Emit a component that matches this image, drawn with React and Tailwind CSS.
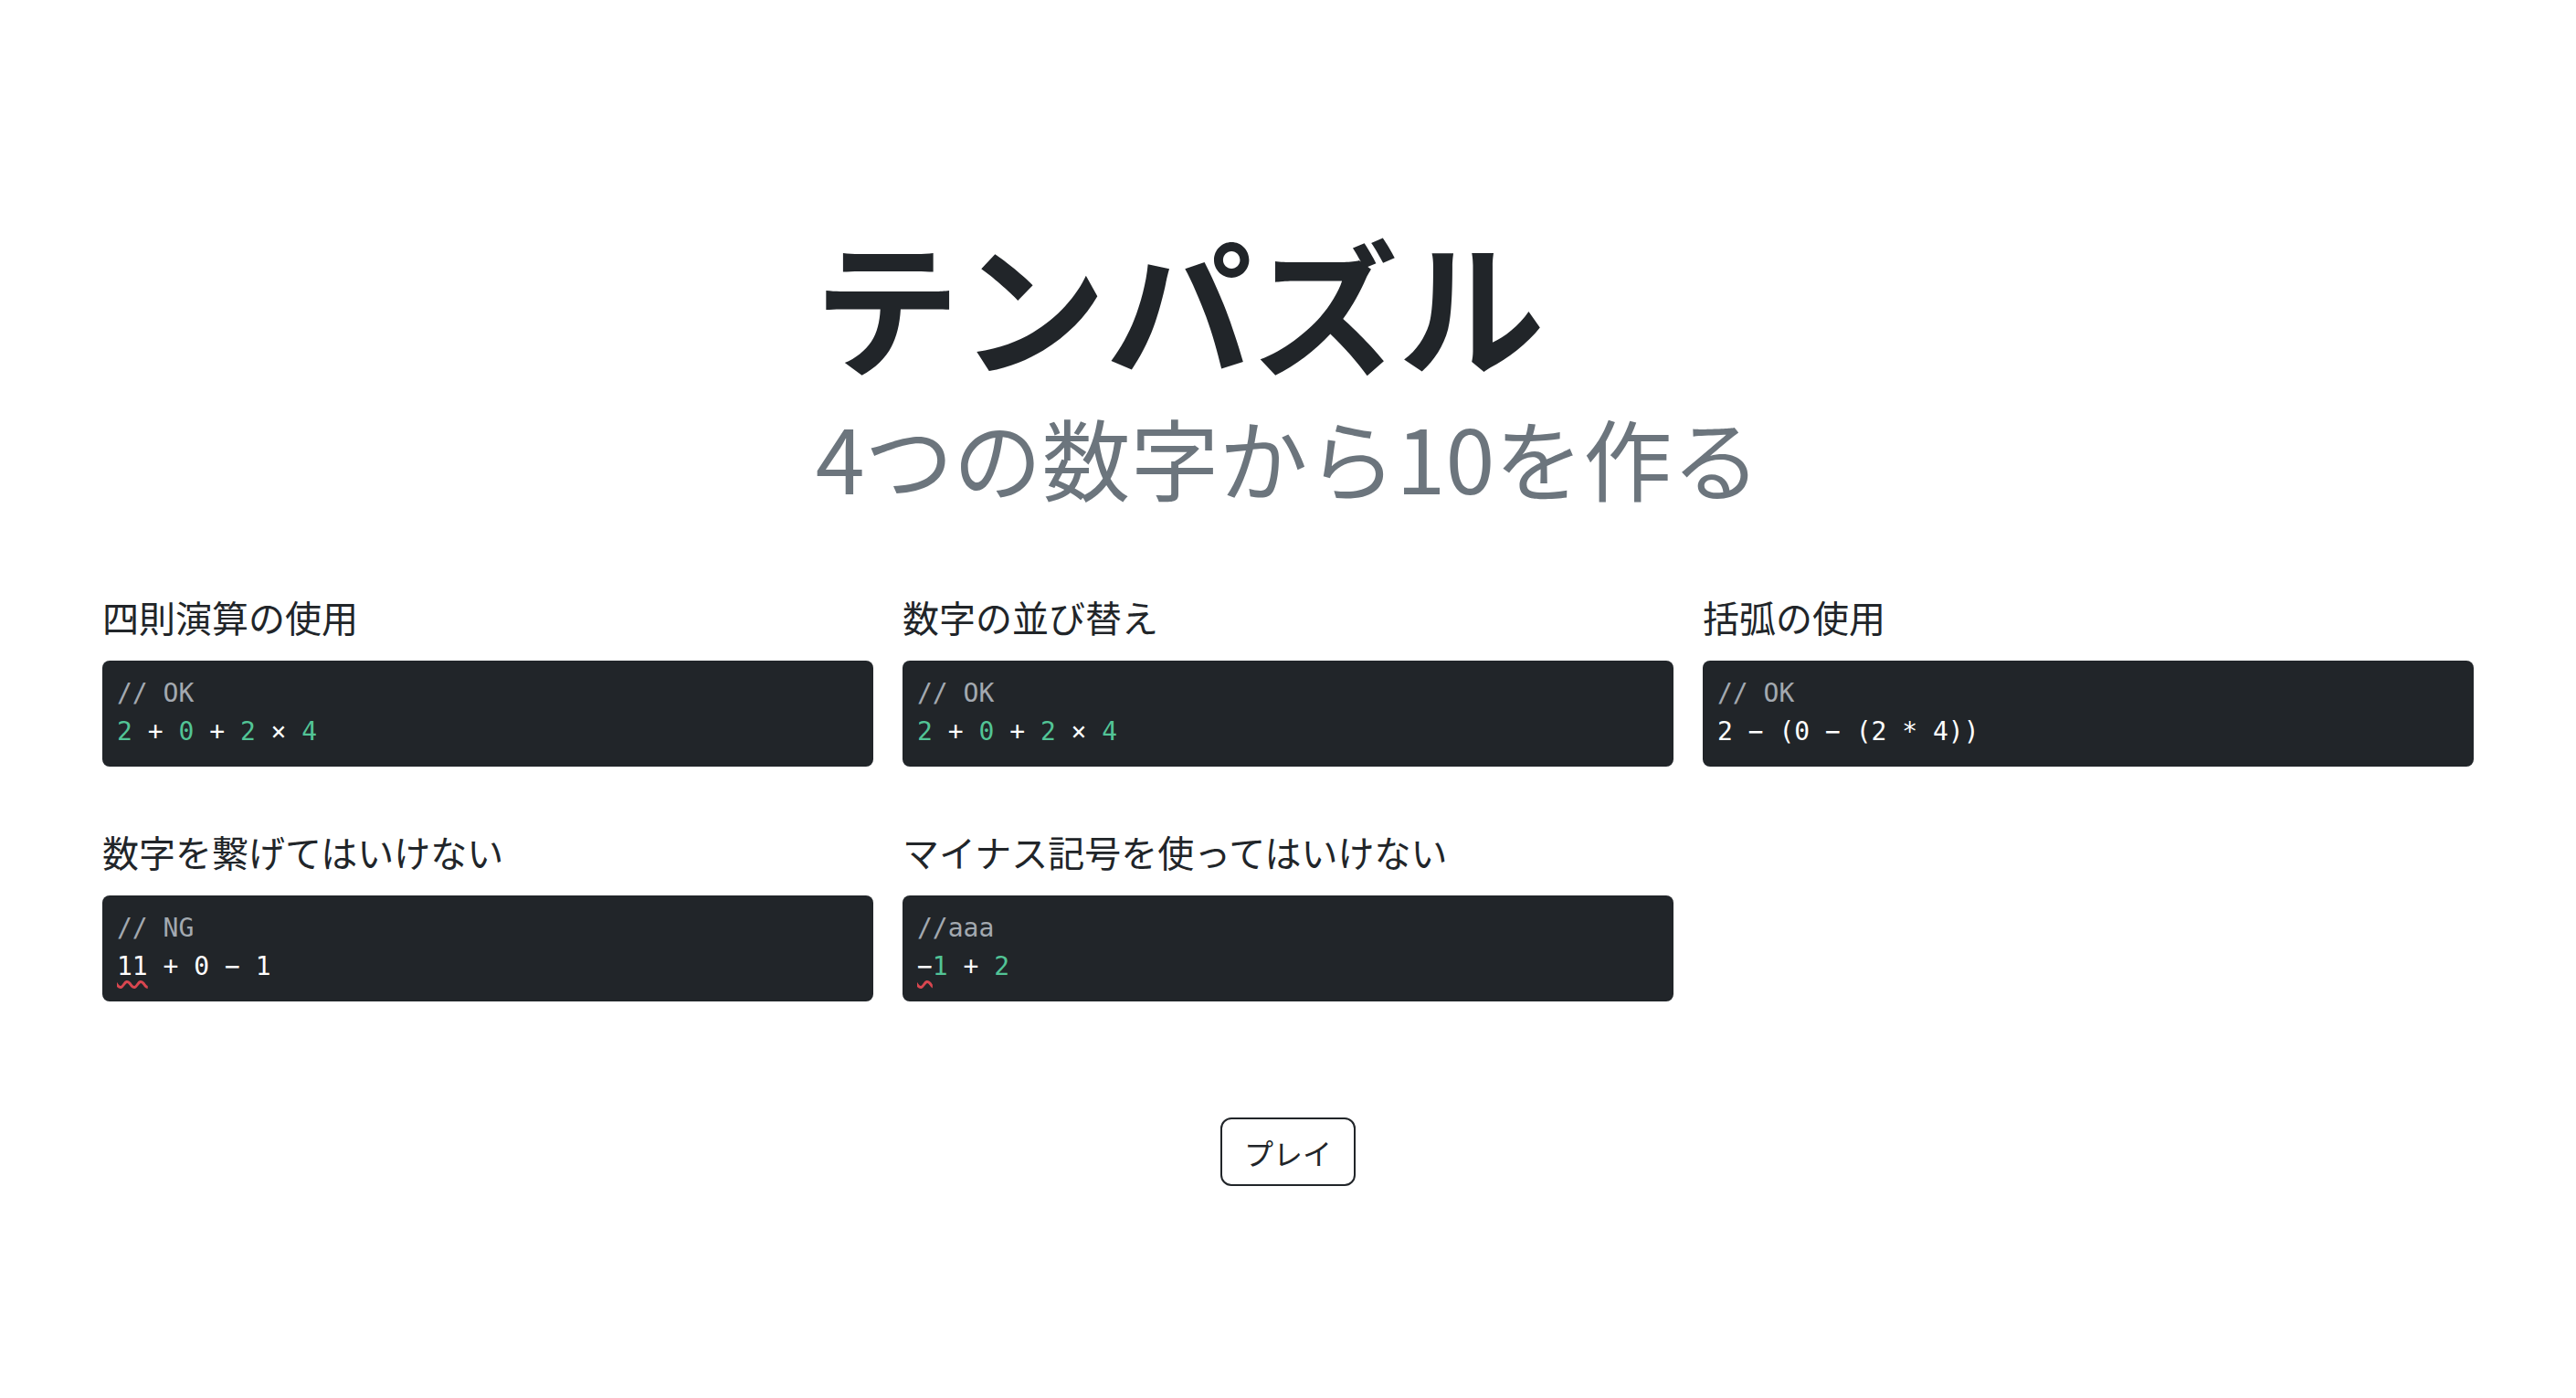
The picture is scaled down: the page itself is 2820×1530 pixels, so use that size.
import React from 'react';

const jp = { fontFamily: '"Noto Sans CJK JP", "Noto Sans", sans-serif' };
const mono = { fontFamily: '"DejaVu Sans Mono", "Liberation Mono", monospace' };

const G = ({ children }) => <span className="text-[#52c496]">{children}</span>;
const W = ({ children }) => <span className="text-white">{children}</span>;
const Bad = ({ children }) => (
  <span className="underline decoration-wavy decoration-[#d9464f] decoration-[3px] underline-offset-[6px]">{children}</span>
);

const rules = [
  {
    title: '四則演算の使用',
    comment: '// OK',
    code: (
      <>
        <G>2</G> <W>+</W> <G>0</G> <W>+</W> <G>2</G> <W>×</W> <G>4</G>
      </>
    ),
  },
  {
    title: '数字の並び替え',
    comment: '// OK',
    code: (
      <>
        <G>2</G> <W>+</W> <G>0</G> <W>+</W> <G>2</G> <W>×</W> <G>4</G>
      </>
    ),
  },
  {
    title: '括弧の使用',
    comment: '// OK',
    code: <W>2 − (0 − (2 * 4))</W>,
  },
  {
    title: '数字を繋げてはいけない',
    comment: '// NG',
    code: (
      <W>
        <Bad>11</Bad> + 0 − 1
      </W>
    ),
  },
  {
    title: 'マイナス記号を使ってはいけない',
    comment: '//aaa',
    code: (
      <>
        <W><Bad>−</Bad></W><G>1</G> <W>+</W> <G>2</G>
      </>
    ),
  },
];

function Rule({ rule }) {
  return (
    <div className="flex flex-col">
      <h3 className="text-[40px] leading-[48px] text-[#212529] mb-[24px]" style={jp}>
        {rule.title}
      </h3>
      <pre className="bg-[#212529] rounded-[8px] px-[16px] pt-[15px] pb-[17px] text-[28px] leading-[42px]" style={mono}>
        <div className="text-[#a3a9b0]">{rule.comment}</div>
        <div>{rule.code}</div>
      </pre>
    </div>
  );
}

export default function App() {
  return (
    <div className="min-h-screen bg-white pt-[234px]" style={jp}>
      <div className="flex justify-center">
        <div className="text-left">
          <h1 className="text-[160px] leading-[192px] font-bold text-[#212529] -ml-[2px]">テンパズル</h1>
          <p className="text-[97px] leading-[116px] text-[#6c757d] mt-[15px]">4つの数字から10を作る</p>
        </div>
      </div>

      <div className="grid grid-cols-3 gap-x-[32px] gap-y-[69px] px-[112px] mt-[94px]">
        {rules.map((r) => (
          <Rule key={r.title} rule={r} />
        ))}
      </div>

      <div className="flex justify-center mt-[127px]">
        <button className="w-[148px] h-[75px] border-2 border-[#212529] rounded-[12px] text-[32px] text-[#212529] bg-white">
          プレイ
        </button>
      </div>
    </div>
  );
}
